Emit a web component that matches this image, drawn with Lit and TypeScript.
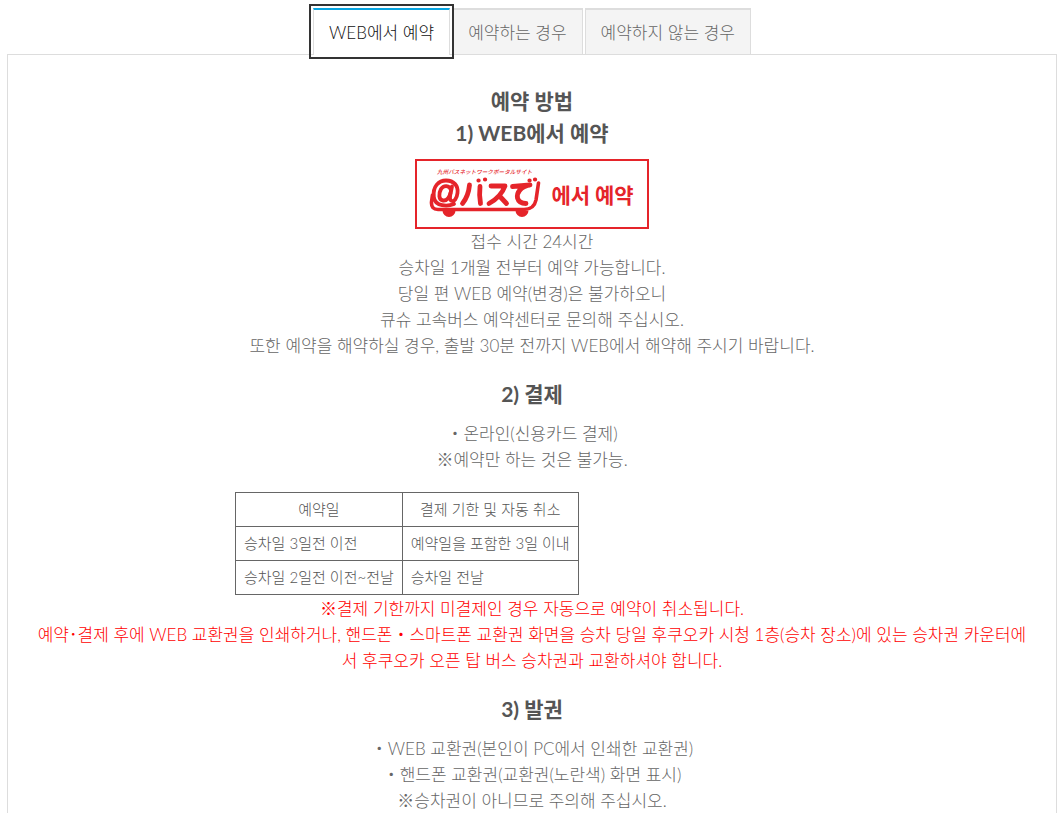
import { LitElement, html, css } from "lit";
import { customElement, state } from "lit/decorators.js";
import { classMap } from "lit/directives/class-map.js";

@customElement("bus-logo")
class BusLogo extends LitElement {
  static styles = css`
    :host { display: block; width: 112px; height: 52px; }
    svg { display: block; width: 100%; height: 100%; }
    .tagline { font: italic 500 5.6px "Noto Sans CJK JP", sans-serif; fill: #e5242a; }
  `;
  render() {
    return html`<svg viewBox="0 0 112 52" role="img" aria-label="@バスで">
      <text class="tagline" x="8" y="6">九州バスネットワークポータルサイト</text>
      <g fill="none" stroke="#e5242a" stroke-width="4.800" stroke-linecap="round" stroke-linejoin="round">
        <path d="M3.500 27L2.500 34Q2 41.500 9 41.500H95Q105 41.500 107 32L109.500 15" stroke-width="3.600" />
        <path d="M25 36C19 38.500 6 39 4.800 29C3.500 18 10 12.500 17 12.500C25 12.500 29.500 18 28.500 25C27.800 31 25 33.500 22.800 33C20.500 32.500 20.800 30 21.200 27L23 18.500" stroke-width="3.800" />
        <path d="M22 22C20.500 17 14.500 17 12 21C9.500 25.500 9.500 32 14 32.500C18 32.800 20.500 29 21.500 25" stroke-width="3.800" />
        <path d="M40.500 17Q39.500 28 33.500 35.500M51 18.500Q50 27 51.500 35.500" />
        <path d="M49.500 12.500h.1M56 11.500h.1M100.500 12.500h.1M106 11.500h.1" stroke-width="4.200" />
        <path d="M62 18H76Q72 29 60 35.500M70.500 28L77.500 35.500" />
        <path d="M83.500 18.500L101 17C91 19 87.500 25 88.500 30Q90 35.500 97 35.500" />
      </g>
      <path d="M13.500 42.500a6.500 6.500 0 0 0 13 0zM86.500 42.500a6.500 6.500 0 0 0 13 0z" fill="#e5242a" />
    </svg>`;
  }
}

@customElement("app-root")
class AppRoot extends LitElement {
  static styles = css`
    :host {
      display: block;
      padding: 8px 4px 0 7px;
      background: #fff;
      color: #666;
      font: 300 17px/26px Lato, "Noto Sans CJK KR", sans-serif;
    }
    .tabs { display: flex; justify-content: center; gap: 2px; }
    .tab {
      font: inherit;
      color: #666;
      background: #f4f4f4;
      border: 1px solid #ddd;
      border-top-width: 2px;
      border-bottom: 0;
      padding: 10px 15px 8px;
      margin: 0;
      cursor: pointer;
    }
    .tab.active {
      position: relative;
      background: #fff;
      color: #111;
      border-top-color: #08a5e1;
      margin-bottom: -1px;
      padding-bottom: 9px;
      outline: 2px solid #333;
      outline-offset: 2px;
    }
    .panel { border: 1px solid #ddd; padding: 30px 26px 40px; text-align: center; }
    h2, h3 {
      margin: 0;
      color: #555;
      font: 700 21px/32px Lato, "Noto Sans CJK KR", sans-serif;
    }
    h3.later { margin-top: 19px; margin-bottom: 11px; }
    p { margin: 0; }
    .banner {
      display: inline-flex;
      align-items: center;
      gap: 10px;
      box-sizing: border-box;
      height: 70px;
      margin-top: 10px;
      padding: 0 13px 0 12px;
      border: 2px solid #e5242a;
      color: #e5242a;
      text-decoration: none;
      font: 700 21px/32px "Noto Sans CJK KR", sans-serif;
      vertical-align: top;
    }
    .limits { max-width: 594px; margin: 19px auto 1px; }
    table { border-collapse: collapse; color: #555; font-size: 15px; line-height: 21px; }
    th, td { border: 1px solid #666; padding: 6px 8px; font-weight: inherit; text-align: left; }
    th { text-align: center; }
    .notice { color: #f00; }
  `;

  @state() private active = 0;
  private tabs = ["WEB에서 예약", "예약하는 경우", "예약하지 않는 경우"];

  render() {
    return html`
      <div class="tabs" role="tablist">
        ${this.tabs.map((label, i) => html`<button
          id="tab-${i}" role="tab" aria-controls="panel"
          aria-selected=${this.active === i ? "true" : "false"}
          class=${classMap({ tab: true, active: this.active === i })}
          @click=${() => (this.active = i)}>${label}</button>`)}
      </div>
      <main class="panel" id="panel" role="tabpanel" aria-labelledby="tab-${this.active}">
        <h2>예약 방법</h2>
        <h3>1) WEB에서 예약</h3>
        <a class="banner" href="#"><bus-logo></bus-logo><span>에서 예약</span></a>
        <p>접수 시간 24시간</p>
        <p>승차일 1개월 전부터 예약 가능합니다.</p>
        <p>당일 편 WEB 예약(변경)은 불가하오니</p>
        <p>큐슈 고속버스 예약센터로 문의해 주십시오.</p>
        <p>또한 예약을 해약하실 경우, 출발 30분 전까지 WEB에서 해약해 주시기 바랍니다.</p>
        <h3 class="later">2) 결제</h3>
        <p>・온라인(신용카드 결제)</p>
        <p>※예약만 하는 것은 불가능.</p>
        <div class="limits">
          <table>
            <thead><tr><th>예약일</th><th>결제 기한 및 자동 취소</th></tr></thead>
            <tbody>
              <tr><td>승차일 3일전 이전</td><td>예약일을 포함한 3일 이내</td></tr>
              <tr><td>승차일 2일전 이전~전날</td><td>승차일 전날</td></tr>
            </tbody>
          </table>
        </div>
        <p class="notice">※결제 기한까지 미결제인 경우 자동으로 예약이 취소됩니다.</p>
        <p class="notice">예약･결제 후에 WEB 교환권을 인쇄하거나, 핸드폰・스마트폰 교환권 화면을 승차 당일 후쿠오카 시청 1층(승차 장소)에 있는 승차권 카운터에서 후쿠오카 오픈 탑 버스 승차권과 교환하셔야 합니다.</p>
        <h3 class="later">3) 발권</h3>
        <p>・WEB 교환권(본인이 PC에서 인쇄한 교환권)</p>
        <p>・핸드폰 교환권(교환권(노란색) 화면 표시)</p>
        <p>※승차권이 아니므로 주의해 주십시오.</p>
      </main>`;
  }
}
